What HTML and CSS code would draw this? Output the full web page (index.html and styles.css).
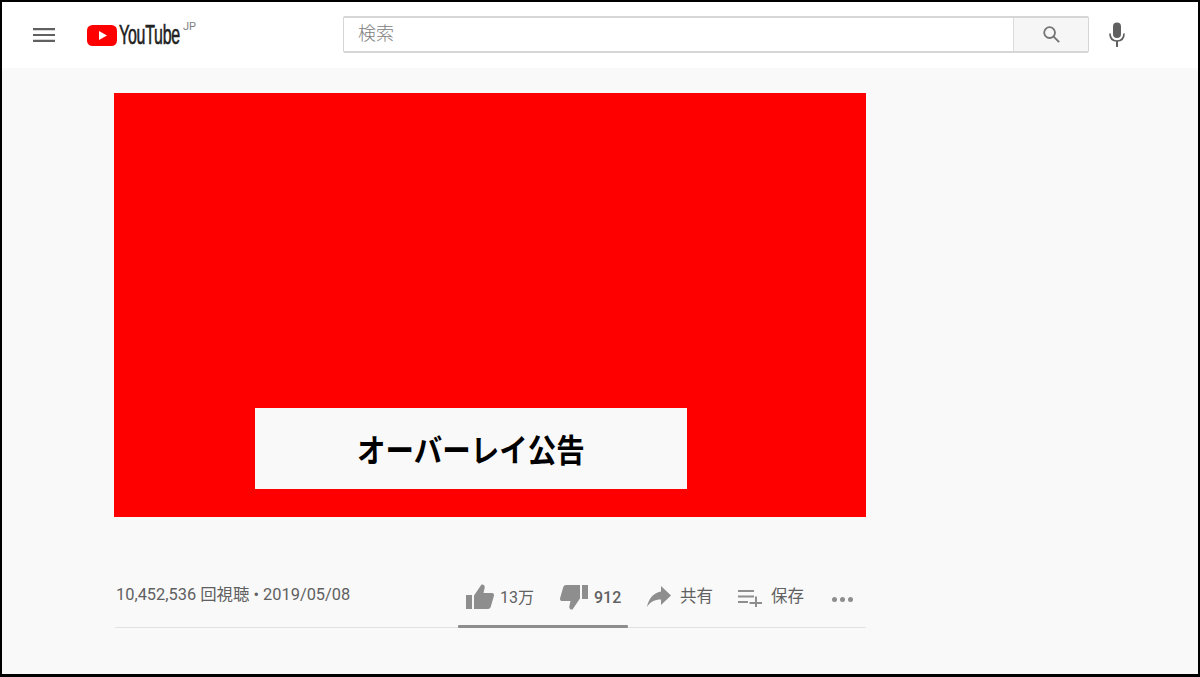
FILE: index.html
```html
<!DOCTYPE html>
<html lang="ja">
<head>
<meta charset="utf-8">
<title>YouTube</title>
<link rel="stylesheet" href="styles.css">
</head>
<body>
<div class="frame">
  <header class="masthead">
    <div class="start">
      <svg class="menu" viewBox="0 0 22 16"><path d="M0 1h22v2.2H0zM0 6.900h22v2.200H0zM0 12.800h22V15H0z"/></svg>
      <div class="logo">
        <svg class="logo-mark" viewBox="0 0 30 21"><rect width="30" height="21" rx="5.500" fill="#f00"/><path d="M12 6l8 4.500-8 4.500z" fill="#fff"/></svg>
        <span class="logo-text">YouTube</span>
        <span class="logo-jp">JP</span>
      </div>
    </div>
    <div class="center">
      <div class="search">
        <div class="search-input">検索</div>
        <div class="search-btn">
          <svg class="search-icon" viewBox="0 0 20 20"><circle cx="8" cy="8" r="5.700" fill="none" stroke="#757575" stroke-width="1.900"/><path d="M12 12l6 6" stroke="#757575" stroke-width="2.100" fill="none"/></svg>
        </div>
      </div>
      <svg class="mic" viewBox="0 0 18 26"><rect x="5" y="0.500" width="8" height="15.500" rx="4" fill="#606060"/><path d="M2 11.500c0 5 3 7.500 7 7.500s7-2.500 7-7.500" fill="none" stroke="#606060" stroke-width="1.700"/><path d="M9 19v6" stroke="#606060" stroke-width="2"/></svg>
    </div>
  </header>
  <main class="page">
    <div class="column">
      <div class="player">
        <div class="overlay-ad"><span class="overlay-text">オーバーレイ公告</span></div>
      </div>
      <div class="info">
        <div class="views">10,452,536 回視聴 • 2019/05/08</div>
        <div class="actions">
          <div class="rate">
            <div class="action like">
              <svg class="ico" viewBox="0 0 28 26"><path d="M0 11h6v14H0zM8 25V11.500L15.500 0.500c2-.5 3.500 1 3.200 3L17.500 9H26c1.500 0 2.300 1.500 1.900 3l-3.200 11c-.4 1.300-1.400 2-2.700 2z"/></svg>
              <span>13万</span>
            </div>
            <div class="action dislike">
              <svg class="ico" viewBox="0 0 28 26"><path d="M28 15h-6V1h6zM20 1v13.500L12.500 25.500c-2 .5-3.500-1-3.200-3L10.500 17H2c-1.500 0-2.300-1.500-1.900-3L3.300 3C3.700 1.700 4.700 1 6 1z"/></svg>
              <span class="strong">912</span>
            </div>
          </div>
          <div class="action share">
            <svg class="ico-share" viewBox="0 0 24 21"><path d="M14 0l10 9.500L14 19v-5.500C7.500 13.500 3.500 15.500 0 21 1.500 13 6 7 14 5.500z"/></svg>
            <span>共有</span>
          </div>
          <div class="action save">
            <svg class="ico-save" viewBox="0 0 24 18"><path d="M0 1h16v2H0zM0 6.500h16v2H0zM0 12h10v2H0zM17 7.500h2V13h5v2h-5v3h-2v-3h-5.500v-2H17z"/></svg>
            <span>保存</span>
          </div>
          <div class="more"><i></i><i></i><i></i></div>
        </div>
      </div>
    </div>
  </main>
</div>
</body>
</html>
```
FILE: styles.css
```css
* { box-sizing: border-box; }
html, body { margin: 0; padding: 0; height: 100%; overflow: hidden; }
body { background: #000; font-family: Roboto, "Noto Sans CJK JP", sans-serif; }
.frame {
  width: 1200px; height: 677px;
  border: solid #000; border-width: 2px 2px 3px 2px;
  background: #f9f9f9;
  display: flex; flex-direction: column;
}
.masthead {
  height: 66px; background: #fff; flex: none;
  display: flex; align-items: flex-start;
}
.start { width: 341px; flex: none; display: flex; align-items: center; padding: 23px 0 0 31px; }
.menu { width: 22px; height: 16px; fill: #606060; display: block; }
.logo { display: flex; align-items: center; margin-left: 32px; position: relative; height: 20px; }
.logo-mark { width: 30px; height: 21px; display: block; flex: none; }
.logo-text {
  font-family: "Liberation Sans", sans-serif;
  font-size: 27px; font-weight: 400; color: #212121; letter-spacing: -.4px;
  -webkit-text-stroke: .6px #212121;
  margin-left: 2px; line-height: 20px; display: inline-block; width: 61px;
  white-space: nowrap;
  transform: scaleX(.59); transform-origin: left center;
}
.logo-jp { position: absolute; left: 96px; top: -4px; font-size: 11px; line-height: 12px; color: #808080; }
.center { display: flex; align-items: flex-start; padding-top: 14px; }
.search {
  width: 746px; height: 37px; display: flex;
  border: 1px solid #d6d6d6; border-top-width: 2px; border-bottom-width: 2px; border-radius: 2px;
  background: #fff;
}
.search-input {
  flex: 1; padding-left: 14px;
  font-size: 18px; line-height: 29px; color: #808080;
  font-family: "Noto Sans CJK JP", sans-serif; font-weight: 300;
}
.search-btn {
  width: 75px; background: #f6f6f6; border-left: 1px solid #dcdcdc;
  display: flex; align-items: center; justify-content: center;
}
.search-icon { width: 19px; height: 19px; display: block; }
.mic { width: 18px; height: 26px; display: block; margin: 6px 0 0 19px; }
.page { flex: 1; padding: 25px 0 0 112px; }
.column { width: 752px; }
.player {
  height: 424px; background: #f00;
  display: flex; align-items: flex-end;
  padding: 0 0 28px 141px;
}
.overlay-ad {
  width: 432px; height: 81px; background: #f9f9f9;
  display: flex; align-items: center; justify-content: center;
  font-family: "Noto Sans CJK JP", sans-serif;
  font-size: 32px; font-weight: 700; color: #000; padding-bottom: 2px;
}
.overlay-text { display: inline-block; white-space: nowrap; transform: scaleX(.89); }
.info {
  margin-top: 46px; height: 65px; margin-left: 1px;
  border-bottom: 1.500px solid #e2e2e2;
  display: flex; justify-content: space-between;
  position: relative;
}
.views { font-size: 16.400px; line-height: 24px; color: #606060; padding: 20px 0 0 1px; height: 44px; }
.actions { display: flex; align-items: flex-start; position: absolute; left: 343px; top: 0; height: 65px; }
.rate {
  width: 170px; height: 65px; display: flex; padding: 21px 0 0 8px;
  position: relative;
}
.rate::after {
  content: ""; position: absolute; left: 0; right: 0; bottom: 0; height: 3px;
  background: #8e8e8e; border-radius: 1px;
}
.action { display: flex; align-items: flex-start; font-size: 16px; line-height: 22px; color: #616161; }
.ico { width: 28px; height: 26px; fill: #8e8e8e; display: block; margin-right: 6px; }
.like { width: 94px; }
.strong { font-weight: 500; }
.like span, .dislike span { padding-top: 3px; }
.share { margin: 21px 0 0 19px; font-size: 16.500px; }
.ico-share { width: 24px; height: 21px; fill: #8e8e8e; display: block; margin: 2px 9px 0 0; }
.share span, .save span { font-family: "Noto Sans CJK JP", sans-serif; }
.save { margin: 21px 0 0 25px; font-size: 16.500px; }
.ico-save { width: 24px; height: 18px; fill: #8e8e8e; display: block; margin: 5px 9px 0 0; }
.more { display: flex; gap: 3px; margin: 34px 0 0 28px; }
.more i { display: block; width: 5px; height: 5px; border-radius: 50%; background: #8e8e8e; }
```
